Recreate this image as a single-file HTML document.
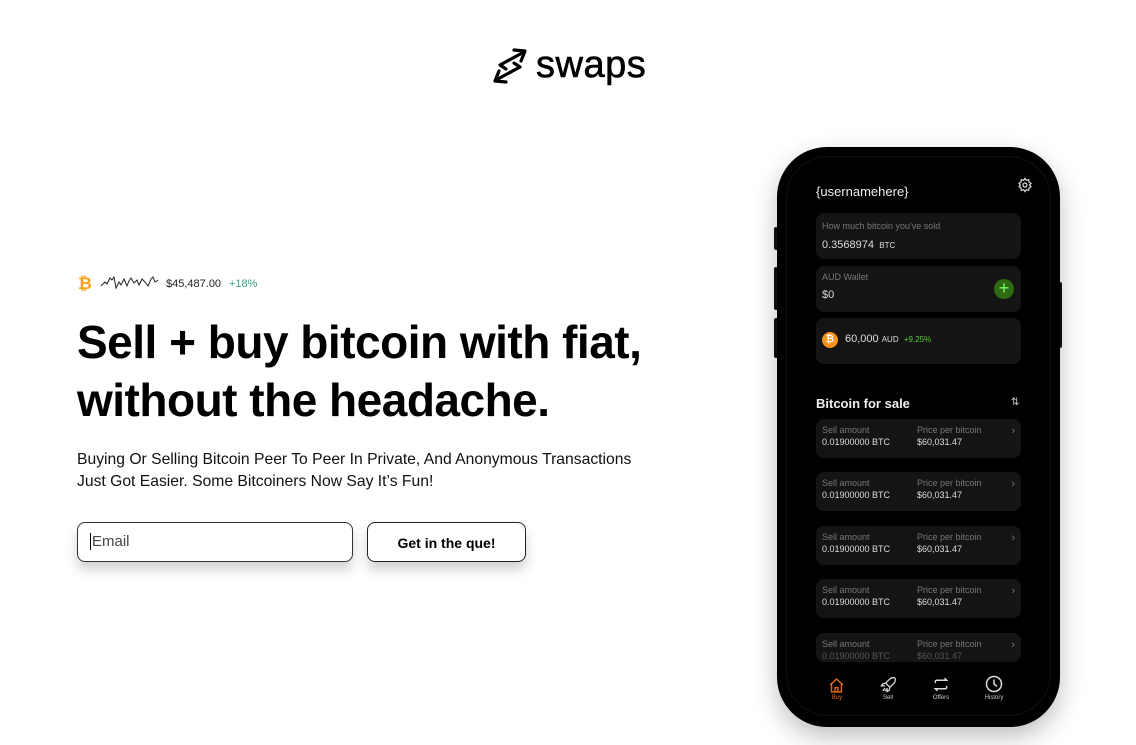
<!DOCTYPE html>
<html><head><meta charset="utf-8"><style>
*{margin:0;padding:0;box-sizing:border-box}
body{width:1136px;height:745px;background:#fff;font-family:"Liberation Sans",sans-serif;position:relative;overflow:hidden;color:#000}
.abs{position:absolute}
.logo{left:490px;top:44px;display:flex;align-items:center}
.logo span{font-size:38px;font-weight:500;margin-left:6px;letter-spacing:0.5px;-webkit-text-stroke:0.6px #000}
h1{position:absolute;left:77px;top:313px;font-size:46px;font-weight:700;line-height:58px;letter-spacing:-0.5px}
.sub{left:77px;top:449px;font-size:15.7px;line-height:22px;color:#111}
.email{left:77px;top:522px;width:276px;height:40px;border:1px solid #333;border-radius:8px;box-shadow:0 8px 12px rgba(0,0,0,.18);font-size:15px;color:#444;padding:10px 12px}
.btn{left:367px;top:522px;width:159px;height:40px;border:1px solid #222;border-radius:8px;box-shadow:0 8px 12px rgba(0,0,0,.18);font-size:14px;font-weight:700;text-align:center;line-height:40px}
.phone{left:777px;top:147px;width:283px;height:580px;background:#000;border-radius:50px;box-shadow:0 10px 25px rgba(0,0,0,.25)}
.inner{left:9px;top:9px;width:265px;height:560px;border:1px solid #0f0f0f;border-radius:42px}
.sb{background:#111;width:4px;border-radius:2px}
.card{left:816px;width:205px;background:#141414;border-radius:8px;color:#ddd}
.lbl{font-size:9px;color:#777}
.row{left:816px;width:205px;height:39px;background:#141414;border-radius:8px}
.row .a{position:absolute;left:6px;top:5px;font-size:9px;color:#777;line-height:12px}
.row .a b{font-weight:400;color:#ddd;display:block}
.row .p{position:absolute;left:101px;top:5px;font-size:9px;color:#777;line-height:12px}
.row .p b{font-weight:400;color:#ddd;display:block}
.row .c{position:absolute;right:6px;top:6px;color:#777;font-size:11px}
.nav{font-size:6px;color:#ccc;text-align:center;width:30px}
</style></head><body>
<div class="abs logo">
<svg width="40" height="42" viewBox="0 0 40 42" fill="none" stroke="#000" stroke-width="3.2" stroke-linejoin="round" stroke-linecap="round">
<path d="M24 5 L35 6 L31 16"/><path d="M34 7 L10 20 L16 24"/>
<path d="M16 37 L5 36 L9 26"/><path d="M6 35 L30 22 L24 18"/>
</svg><span>swaps</span></div>

<div class="abs" style="left:78px;top:274px;font-size:17px;font-weight:700;color:#f7a21a">₿</div>
<svg class="abs" style="left:101px;top:274px" width="58" height="18" viewBox="0 0 58 18" fill="none" stroke="#222" stroke-width="1"><path d="M0 12 L4 8 L6 10 L9 4 L11 6 L13 3 L15 14 L18 8 L20 11 L23 5 L26 12 L28 7 L30 4 L33 9 L36 6 L38 11 L41 5 L44 8 L47 12 L50 5 L52 3 L54 8 L57 6"/></svg>
<div class="abs" style="left:166px;top:278px;font-size:11px;color:#222">$45,487.00</div>
<div class="abs" style="left:229px;top:278px;font-size:11px;color:#3aa37a">+18%</div>

<h1>Sell + buy bitcoin with fiat,<br>without the headache.</h1>
<div class="abs sub">Buying Or Selling Bitcoin Peer To Peer In Private, And Anonymous Transactions<br>Just Got Easier. Some Bitcoiners Now Say It’s Fun!</div>
<div class="abs email"><span style="border-left:1px solid #000;padding-left:1px">Email</span></div>
<div class="abs btn">Get in the que!</div>

<div class="abs sb" style="left:774px;top:227px;height:23px"></div>
<div class="abs sb" style="left:774px;top:267px;height:43px"></div>
<div class="abs sb" style="left:774px;top:318px;height:40px"></div>
<div class="abs sb" style="left:1058px;top:282px;height:66px"></div>
<div class="abs phone"><div class="abs inner"></div></div>

<div class="abs" style="left:816px;top:184px;font-size:13px;color:#eee">{usernamehere}</div>
<svg class="abs" style="left:1017px;top:177px" width="16" height="16" viewBox="0 0 24 24" fill="none" stroke="#ddd" stroke-width="1.8"><circle cx="12" cy="12" r="3"/><path d="M12 2l2 3 3.5-1 .5 3.5 3 2-2 2.5 2 2.5-3 2-.5 3.5-3.5-1-2 3-2-3-3.5 1-.5-3.5-3-2 2-2.5-2-2.5 3-2 .5-3.5 3.5 1z"/></svg>

<div class="abs card" style="top:213px;height:46px"><div class="abs lbl" style="left:6px;top:8px">How much bitcoin you've sold</div><div class="abs" style="left:6px;top:26px;font-size:11px">0.3568974 <span style="font-size:8px">&nbsp;BTC</span></div></div>
<div class="abs card" style="top:266px;height:46px"><div class="abs lbl" style="left:6px;top:6px">AUD Wallet</div><div class="abs" style="left:6px;top:23px;font-size:11px">$0</div>
<div class="abs" style="left:178px;top:13px;width:20px;height:20px;border-radius:50%;background:#2f6b12;color:#7f6;font-size:18px;line-height:19px;text-align:center">+</div></div>
<div class="abs card" style="top:318px;height:46px"><div class="abs" style="left:6px;top:14px;width:16px;height:16px;border-radius:50%;background:#f7931a;color:#fff;font-size:10px;font-weight:700;text-align:center;line-height:16px">₿</div><div class="abs" style="left:29px;top:15px;font-size:11px">60,000 <span style="font-size:8px">AUD</span> <span style="font-size:8px;color:#5c3">&nbsp;+9.25%</span></div></div>

<div class="abs" style="left:816px;top:396px;font-size:13px;font-weight:700;color:#eee">Bitcoin for sale</div>
<div class="abs" style="left:1011px;top:397px;font-size:10px;color:#ccc">⇅</div>

<div class="abs row" style="top:419px"><div class="a">Sell amount<b>0.01900000 BTC</b></div><div class="p">Price per bitcoin<b>$60,031.47</b></div><div class="c">›</div></div>
<div class="abs row" style="top:472px"><div class="a">Sell amount<b>0.01900000 BTC</b></div><div class="p">Price per bitcoin<b>$60,031.47</b></div><div class="c">›</div></div>
<div class="abs row" style="top:526px"><div class="a">Sell amount<b>0.01900000 BTC</b></div><div class="p">Price per bitcoin<b>$60,031.47</b></div><div class="c">›</div></div>
<div class="abs row" style="top:579px"><div class="a">Sell amount<b>0.01900000 BTC</b></div><div class="p">Price per bitcoin<b>$60,031.47</b></div><div class="c">›</div></div>
<div class="abs row" style="top:633px;height:29px;overflow:hidden"><div class="a">Sell amount<b style="color:#555">0.01900000 BTC</b></div><div class="p">Price per bitcoin<b style="color:#555">$60,031.47</b></div><div class="c">›</div></div>

<svg class="abs" style="left:828px;top:677px" width="17" height="17" viewBox="0 0 24 24" fill="none" stroke="#e06a10" stroke-width="2"><path d="M3 11L12 3l9 8M5 9v12h14V9M10 21v-6h4v6"/></svg>
<div class="abs nav" style="left:822px;top:695px;color:#e06a10">Buy</div>
<svg class="abs" style="left:880px;top:676px" width="17" height="17" viewBox="0 0 24 24" fill="none" stroke="#ddd" stroke-width="1.8"><path d="M14 4c3-2 6-2 7-1 1 1 1 4-1 7l-6 6-6-6zM8 10l-4 1-2 3 5 0M14 16l-1 4-3 2 0-5M7 17l-3 4M9 19l-2 2"/></svg>
<div class="abs nav" style="left:873px;top:695px">Sell</div>
<svg class="abs" style="left:932px;top:676px" width="18" height="17" viewBox="0 0 24 24" fill="none" stroke="#ddd" stroke-width="2"><path d="M4 10V8a2 2 0 0 1 2-2h14l-3-3M20 14v2a2 2 0 0 1-2 2H4l3 3"/></svg>
<div class="abs nav" style="left:926px;top:695px">Offers</div>
<svg class="abs" style="left:985px;top:675px" width="18" height="18" viewBox="0 0 24 24" fill="none" stroke="#ddd" stroke-width="2"><circle cx="12" cy="12" r="10"/><path d="M12 6v6l4 3"/></svg>
<div class="abs nav" style="left:979px;top:695px">History</div>
</body></html>
